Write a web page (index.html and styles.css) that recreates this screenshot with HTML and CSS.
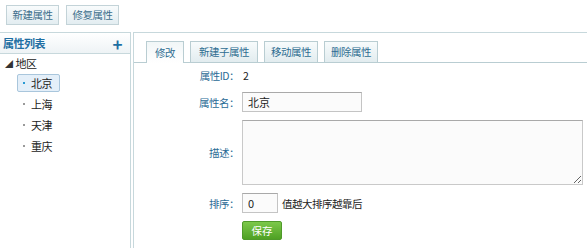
FILE: index.html
```html
<!DOCTYPE html>
<html lang="zh-CN">

<head>
    <meta charset="UTF-8">
    <title>属性管理</title>
    <link rel="stylesheet" href="styles.css">
</head>

<body>
    <!-- 工具栏 -->
    <div class="toolbar">
        <button class="tool-btn">新建属性</button>
        <button class="tool-btn">修复属性</button>
    </div>

    <div class="main">
        <!-- 左侧属性树 -->
        <div class="side">
            <div class="side-head">
                <span>属性列表</span>
                <span class="plus">+</span>
            </div>
            <ul class="tree">
                <li class="root"><span class="arrow">◢</span>地区</li>
                <li class="node active"><span class="dot"></span>北京</li>
                <li class="node"><span class="dot"></span>上海</li>
                <li class="node"><span class="dot"></span>天津</li>
                <li class="node"><span class="dot"></span>重庆</li>
            </ul>
        </div>

        <!-- 右侧编辑区 -->
        <div class="content">
            <div class="tabs">
                <span class="tab current">修改</span>
                <span class="tab wide">新建子属性</span>
                <span class="tab">移动属性</span>
                <span class="tab">删除属性</span>
            </div>

            <div class="form">
                <div class="row row-id">
                    <label>属性ID：</label>
                    <span class="val">2</span>
                </div>
                <div class="row">
                    <label>属性名：</label>
                    <input class="txt name" type="text" value="北京">
                </div>
                <div class="row row-desc">
                    <label>描述：</label>
                    <textarea class="desc"></textarea>
                </div>
                <div class="row">
                    <label>排序：</label>
                    <input class="txt sort" type="text" value="0">
                    <span class="hint">值越大排序越靠后</span>
                </div>
                <div class="row">
                    <label></label>
                    <button class="save">保存</button>
                </div>
            </div>
        </div>
    </div>
</body>

</html>
```

FILE: styles.css
```css
body,
html {
    padding: 0;
    margin: 0;
}

body {
    height: 248px;
    background: #fff;
    font-family: "Noto Sans CJK SC", "Liberation Sans", sans-serif;
    font-size: 10.5px;
    letter-spacing: -0.5px;
    color: #222;
    overflow: hidden;
}

/* 工具栏 */
.toolbar {
    display: flex;
    gap: 7px;
    padding: 5px 6px 0;
    box-sizing: border-box;
    height: 32px;
}

.tool-btn {
    width: 53px;
    height: 20px;
    padding: 0;
    margin: 0;
    border: 1px solid #c3d3d8;
    background: linear-gradient(#f8fbfc, #e3edf1);
    color: #3d6f8c;
    font-family: inherit;
    font-size: 10.5px;
    letter-spacing: -0.5px;
    line-height: 18px;
}

.main {
    display: flex;
    height: 216px;
}

/* 左侧 */
.side {
    width: 130px;
    border-top: 1px solid #c7d8dc;
    border-right: 1px solid #c7d8dc;
}

.side-head {
    display: flex;
    justify-content: space-between;
    align-items: center;
    height: 20px;
    padding: 0 8px 0 3px;
    border-bottom: 1px solid #c7d8dc;
    background: linear-gradient(#ffffff, #eef3f5);
    color: #1f6fa3;
    font-weight: bold;
    font-size: 11px;
}

.plus {
    font-size: 17px;
    line-height: 17px;
}

.tree {
    list-style: none;
    margin: 0;
    padding: 1px 0 0;
    font-size: 11px;
}

.tree li {
    display: flex;
    align-items: center;
    height: 16px;
}

.root {
    padding-left: 5px;
    margin-bottom: 3px;
}

.arrow {
    font-size: 8px;
    margin-right: 3px;
    color: #333;
}

.node {
    width: fit-content;
    margin: 0 0 3px 17px;
    padding: 0 7px 0 5px;
    border: 1px solid transparent;
    border-radius: 2px;
}

.node.active {
    border-color: #a9c6dc;
    background: #e4eff9;
}

.dot {
    width: 2px;
    height: 2px;
    margin-right: 6px;
    background: #9a9a9a;
}

.active .dot {
    background: #2a9ad3;
}

/* 右侧 */
.content {
    flex: 1;
    margin-left: 2px;
    border-top: 1px solid #c7d8dc;
    border-left: 1px solid #c7d8dc;
}

.tabs {
    display: flex;
    align-items: flex-end;
    gap: 6px;
    height: 29px;
    padding-left: 12px;
    border-bottom: 1px solid #b9cdd2;
}

.tab {
    height: 20px;
    padding: 0 6px;
    border: 1px solid #b9cdd2;
    border-bottom: none;
    background: linear-gradient(#f7fbfc, #e2ecef);
    color: #2e6d91;
    line-height: 20px;
}

.tab.wide {
    padding: 0 8px;
}

.tab.current {
    height: 21px;
    padding: 0 8px;
    margin-bottom: -1px;
    background: linear-gradient(#f1f6f7, #ffffff);
    line-height: 21px;
}

.form {
    display: flex;
    flex-direction: column;
    gap: 8px;
    padding-top: 3px;
}

.row {
    display: flex;
    align-items: center;
}

.row label {
    width: 105px;
    text-align: right;
    padding-right: 3px;
    color: #2a6b96;
}

.row-id {
    height: 18px;
}

.val {
    padding-left: 1px;
}

.txt {
    height: 18px;
    padding: 0 5px;
    border: 1px solid #c4c4c4;
    border-top-color: #a9a9a9;
    background: #fbfbfb;
    font-family: inherit;
    font-size: 11px;
    color: #222;
}

.name {
    width: 108px;
}

.sort {
    width: 24px;
}

.hint {
    margin-left: 4px;
}

.desc {
    width: 339px;
    height: 63px;
    padding: 0;
    border: 1px solid #c9c9c9;
    border-top-color: #a9a9a9;
    background: #fbfbfb;
}

.save {
    height: 19px;
    width: 40px;
    margin: 0;
    padding: 0;
    border: 1px solid #4f9a2a;
    border-radius: 2px;
    background: linear-gradient(#7cc84a, #4fa124);
    color: #fff;
    font-family: inherit;
    font-size: 10.5px;
    line-height: 16px;
}
```
